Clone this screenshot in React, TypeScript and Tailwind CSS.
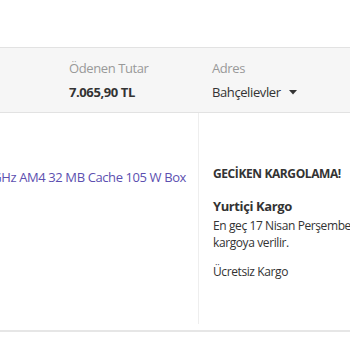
import React from 'react';

export default function App() {
  return (
    <div className="w-[350px] h-[350px] bg-white overflow-hidden text-[#333] tracking-[-0.4px] font-['Open_Sans',sans-serif]">
      <div className="h-[47px]" />
      <div className="border-t border-b border-[#e2e2e2] bg-[#f6f6f6] h-[66px] flex">
        <div className="w-[198px] shrink-0 pl-[69px] pt-[11px]">
          <p className="text-[13px] leading-[18px] text-[#999]">Ödenen Tutar</p>
          <p className="text-[13px] leading-[18px] font-bold mt-[6px]">7.065,90 TL</p>
        </div>
        <div className="pl-[14px] pt-[11px]">
          <p className="text-[13px] leading-[18px] text-[#999]">Adres</p>
          <div className="flex items-center gap-[8px] mt-[6px]">
            <span className="text-[13px] leading-[18px]">Bahçelievler</span>
            <svg width="8" height="5" viewBox="0 0 8 5" className="mt-[1px]">
              <path d="M0 0 L8 0 L4 4.5 Z" fill="#333" />
            </svg>
          </div>
        </div>
      </div>
      <div className="flex h-[219px] border-b-2 border-[#e6e6e6]">
        <div className="w-[198px] shrink-0 flex justify-end overflow-hidden pr-[12px] pt-[55px]">
          <p className="whitespace-nowrap text-[13px] leading-[18px] text-[#5c4fb0]">
            AMD Ryzen 7 5800X 3.8 GHz AM4 32 MB Cache 105 W Box
          </p>
        </div>
        <div className="border-l border-[#eeeeee] pl-[14px] pt-[52px] mb-[6px] flex-1 min-w-0">
          <p className="text-[12px] leading-[18px] font-bold whitespace-nowrap">GECİKEN KARGOLAMA!</p>
          <p className="text-[13px] leading-[20px] font-bold mt-[13px]">Yurtiçi Kargo</p>
          <p className="text-[12px] leading-[17px] mt-[1px] whitespace-nowrap">En geç 17 Nisan Perşembe günü</p>
          <p className="text-[12px] leading-[17px]">kargoya verilir.</p>
          <p className="text-[12px] leading-[17px] mt-[12px]">Ücretsiz Kargo</p>
        </div>
      </div>
    </div>
  );
}
